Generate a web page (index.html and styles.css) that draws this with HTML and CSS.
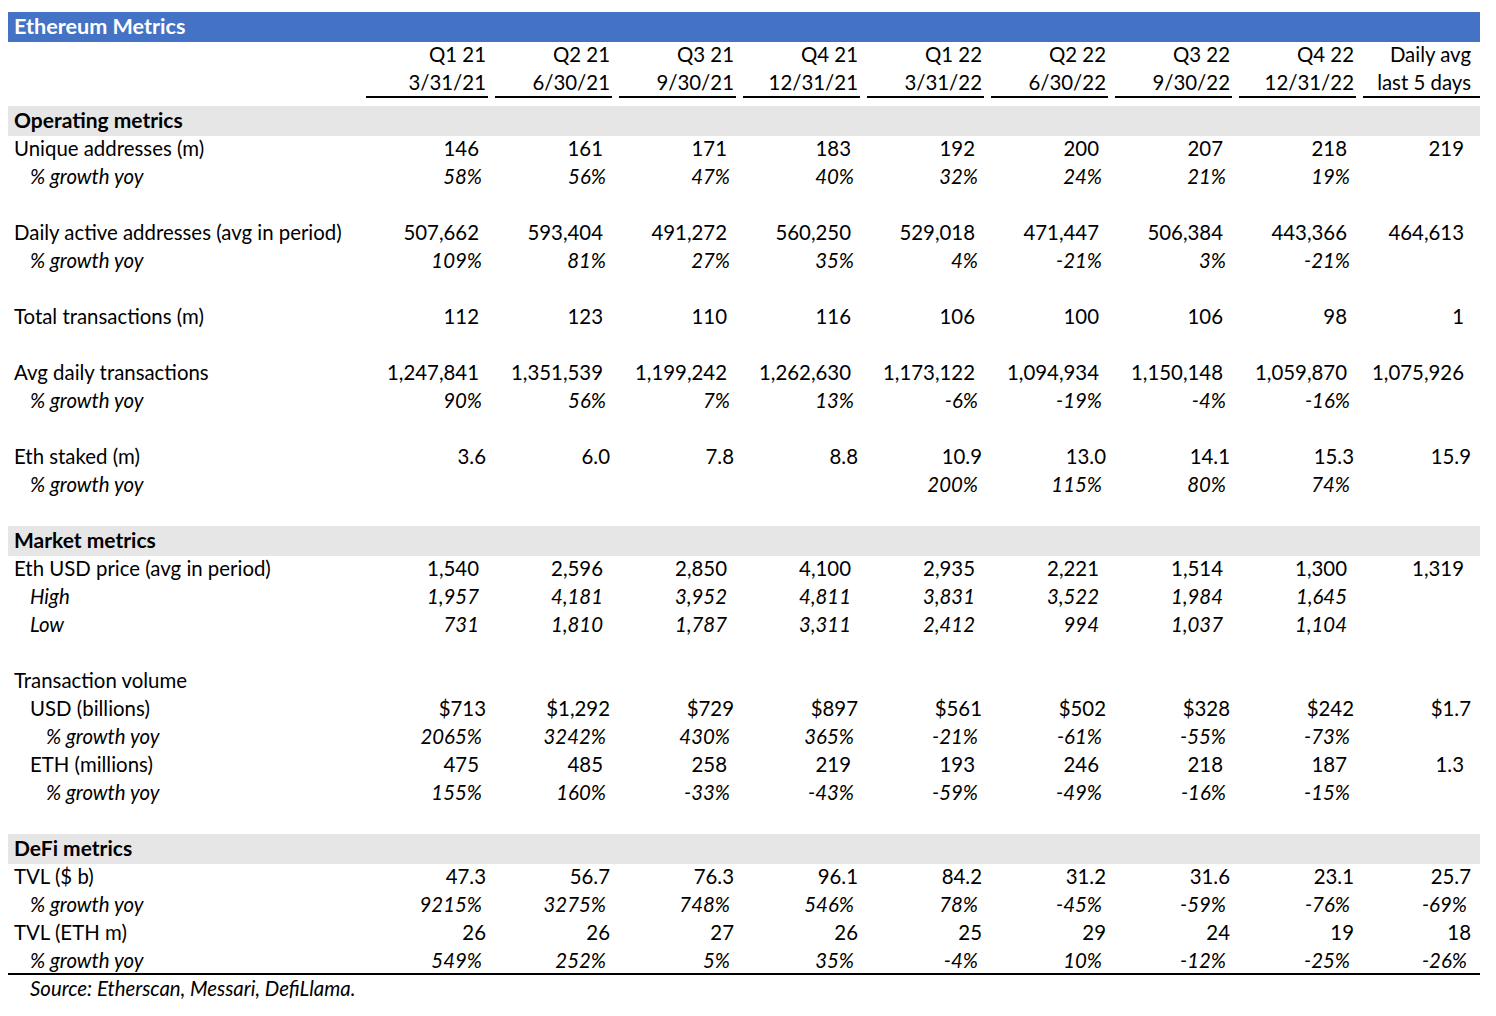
FILE: index.html
```html
<!DOCTYPE html>
<html lang="en">
<head>
<meta charset="utf-8">
<title>Ethereum Metrics</title>
<link rel="stylesheet" href="styles.css">
</head>
<body>
<div class="sheet">
  <div class="title">Ethereum Metrics</div>

  <div class="row head">
    <span class="lbl"></span>
    <span class="h">Q1 21</span><span class="h">Q2 21</span><span class="h">Q3 21</span><span class="h">Q4 21</span><span class="h">Q1 22</span><span class="h">Q2 22</span><span class="h">Q3 22</span><span class="h">Q4 22</span><span class="h">Daily avg</span>
  </div>
  <div class="row head under">
    <span class="lbl"></span>
    <span class="h first">3/31/21</span><span class="h">6/30/21</span><span class="h">9/30/21</span><span class="h">12/31/21</span><span class="h">3/31/22</span><span class="h">6/30/22</span><span class="h">9/30/22</span><span class="h">12/31/22</span><span class="h">last 5 days</span>
  </div>

  <div class="body">
    <div class="row section"><span class="lbl">Operating metrics</span></div>
    <div class="row">
      <span class="lbl">Unique addresses (m)</span>
      <span class="i">146</span><span class="i">161</span><span class="i">171</span><span class="i">183</span><span class="i">192</span><span class="i">200</span><span class="i">207</span><span class="i">218</span><span class="i">219</span>
    </div>
    <div class="row">
      <span class="lbl l1 it">% growth yoy</span>
      <span class="p">58%</span><span class="p">56%</span><span class="p">47%</span><span class="p">40%</span><span class="p">32%</span><span class="p">24%</span><span class="p">21%</span><span class="p">19%</span><span class="p"></span>
    </div>
    <div class="row"></div>
    <div class="row">
      <span class="lbl">Daily active addresses (avg in period)</span>
      <span class="i">507,662</span><span class="i">593,404</span><span class="i">491,272</span><span class="i">560,250</span><span class="i">529,018</span><span class="i">471,447</span><span class="i">506,384</span><span class="i">443,366</span><span class="i">464,613</span>
    </div>
    <div class="row">
      <span class="lbl l1 it">% growth yoy</span>
      <span class="p">109%</span><span class="p">81%</span><span class="p">27%</span><span class="p">35%</span><span class="p">4%</span><span class="p">-21%</span><span class="p">3%</span><span class="p">-21%</span><span class="p"></span>
    </div>
    <div class="row"></div>
    <div class="row">
      <span class="lbl">Total transactions (m)</span>
      <span class="i">112</span><span class="i">123</span><span class="i">110</span><span class="i">116</span><span class="i">106</span><span class="i">100</span><span class="i">106</span><span class="i">98</span><span class="i">1</span>
    </div>
    <div class="row"></div>
    <div class="row">
      <span class="lbl">Avg daily transactions</span>
      <span class="i">1,247,841</span><span class="i">1,351,539</span><span class="i">1,199,242</span><span class="i">1,262,630</span><span class="i">1,173,122</span><span class="i">1,094,934</span><span class="i">1,150,148</span><span class="i">1,059,870</span><span class="i">1,075,926</span>
    </div>
    <div class="row">
      <span class="lbl l1 it">% growth yoy</span>
      <span class="p">90%</span><span class="p">56%</span><span class="p">7%</span><span class="p">13%</span><span class="p">-6%</span><span class="p">-19%</span><span class="p">-4%</span><span class="p">-16%</span><span class="p"></span>
    </div>
    <div class="row"></div>
    <div class="row">
      <span class="lbl">Eth staked (m)</span>
      <span class="d">3.6</span><span class="d">6.0</span><span class="d">7.8</span><span class="d">8.8</span><span class="d">10.9</span><span class="d">13.0</span><span class="d">14.1</span><span class="d">15.3</span><span class="d">15.9</span>
    </div>
    <div class="row">
      <span class="lbl l1 it">% growth yoy</span>
      <span class="p"></span><span class="p"></span><span class="p"></span><span class="p"></span><span class="p">200%</span><span class="p">115%</span><span class="p">80%</span><span class="p">74%</span><span class="p"></span>
    </div>
    <div class="row"></div>

    <div class="row section"><span class="lbl">Market metrics</span></div>
    <div class="row">
      <span class="lbl">Eth USD price (avg in period)</span>
      <span class="i">1,540</span><span class="i">2,596</span><span class="i">2,850</span><span class="i">4,100</span><span class="i">2,935</span><span class="i">2,221</span><span class="i">1,514</span><span class="i">1,300</span><span class="i">1,319</span>
    </div>
    <div class="row it">
      <span class="lbl l1">High</span>
      <span class="i">1,957</span><span class="i">4,181</span><span class="i">3,952</span><span class="i">4,811</span><span class="i">3,831</span><span class="i">3,522</span><span class="i">1,984</span><span class="i">1,645</span><span class="i"></span>
    </div>
    <div class="row it">
      <span class="lbl l1">Low</span>
      <span class="i">731</span><span class="i">1,810</span><span class="i">1,787</span><span class="i">3,311</span><span class="i">2,412</span><span class="i">994</span><span class="i">1,037</span><span class="i">1,104</span><span class="i"></span>
    </div>
    <div class="row"></div>
    <div class="row"><span class="lbl">Transaction volume</span></div>
    <div class="row">
      <span class="lbl l1">USD (billions)</span>
      <span class="d">$713</span><span class="d">$1,292</span><span class="d">$729</span><span class="d">$897</span><span class="d">$561</span><span class="d">$502</span><span class="d">$328</span><span class="d">$242</span><span class="d">$1.7</span>
    </div>
    <div class="row">
      <span class="lbl l2 it">% growth yoy</span>
      <span class="p">2065%</span><span class="p">3242%</span><span class="p">430%</span><span class="p">365%</span><span class="p">-21%</span><span class="p">-61%</span><span class="p">-55%</span><span class="p">-73%</span><span class="p"></span>
    </div>
    <div class="row">
      <span class="lbl l1">ETH (millions)</span>
      <span class="i">475</span><span class="i">485</span><span class="i">258</span><span class="i">219</span><span class="i">193</span><span class="i">246</span><span class="i">218</span><span class="i">187</span><span class="i">1.3</span>
    </div>
    <div class="row">
      <span class="lbl l2 it">% growth yoy</span>
      <span class="p">155%</span><span class="p">160%</span><span class="p">-33%</span><span class="p">-43%</span><span class="p">-59%</span><span class="p">-49%</span><span class="p">-16%</span><span class="p">-15%</span><span class="p"></span>
    </div>
    <div class="row"></div>

    <div class="row section"><span class="lbl">DeFi metrics</span></div>
    <div class="row">
      <span class="lbl">TVL ($ b)</span>
      <span class="d">47.3</span><span class="d">56.7</span><span class="d">76.3</span><span class="d">96.1</span><span class="d">84.2</span><span class="d">31.2</span><span class="d">31.6</span><span class="d">23.1</span><span class="d">25.7</span>
    </div>
    <div class="row">
      <span class="lbl l1 it">% growth yoy</span>
      <span class="p">9215%</span><span class="p">3275%</span><span class="p">748%</span><span class="p">546%</span><span class="p">78%</span><span class="p">-45%</span><span class="p">-59%</span><span class="p">-76%</span><span class="p">-69%</span>
    </div>
    <div class="row">
      <span class="lbl">TVL (ETH m)</span>
      <span class="d">26</span><span class="d">26</span><span class="d">27</span><span class="d">26</span><span class="d">25</span><span class="d">29</span><span class="d">24</span><span class="d">19</span><span class="d">18</span>
    </div>
    <div class="row last">
      <span class="lbl l1 it">% growth yoy</span>
      <span class="p">549%</span><span class="p">252%</span><span class="p">5%</span><span class="p">35%</span><span class="p">-4%</span><span class="p">10%</span><span class="p">-12%</span><span class="p">-25%</span><span class="p">-26%</span>
    </div>
    <div class="row source"><span class="lbl l1 it">Source: Etherscan, Messari, DefiLlama.</span></div>
  </div>
</div>
</body>
</html>
```

FILE: styles.css
```css
* { box-sizing: border-box; }

html, body {
  margin: 0;
  padding: 0;
  background: #ffffff;
}

body {
  font-family: Lato, "Liberation Sans", sans-serif;
  font-size: 20.4px;
  color: #000000;
}

.sheet {
  width: 1472px;
  margin: 12px 0 0 8px;
}

.title {
  height: 30px;
  line-height: 29px;
  background: #4472c4;
  color: #ffffff;
  font-weight: 700;
  font-size: 21.6px;
  padding-left: 6px;
}

.row {
  display: grid;
  grid-template-columns: 356px repeat(9, 124px);
  height: 28px;
  align-items: start;
  white-space: nowrap;
}

.row > span {
  display: block;
  text-align: right;
  height: 28px;
  line-height: 26px;
  padding-right: var(--pr, 2px);
}

.row > span:last-child:not(.lbl) {
  padding-right: calc(var(--pr, 2px) + 7px);
}

.row > .lbl {
  text-align: left;
  padding-left: 6px;
  padding-right: 0;
}

.row > .l1 { padding-left: 22px; }
.row > .l2 { padding-left: 38px; }

.it { font-style: italic; }

.i { --pr: 9px; }
.d { --pr: 2px; }
.p { --pr: 6px; font-style: italic; }
.h { --pr: 2px; }

.head .h {
  line-height: 25px;
}

.head.under .h {
  border-bottom: 2px solid #000000;
  margin-left: 7px;
  line-height: 24px;
}

.head.under .h.first {
  margin-left: 2px;
}

.body {
  margin-top: 9px;
}

.section {
  background: #e7e6e6;
  box-shadow: 0 -1px 0 #e7e6e6, 0 1px 0 #e7e6e6;
  font-weight: 700;
  font-size: 21px;
}

.last {
  border-bottom: 2px solid #000000;
}

.last > span {
  height: 26px;
}
```
